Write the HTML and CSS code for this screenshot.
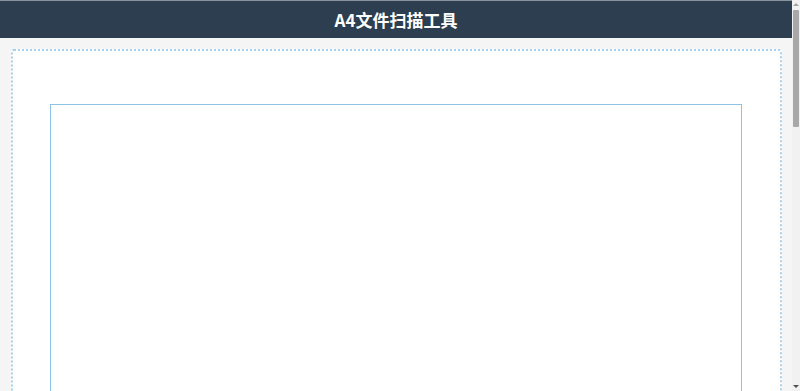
FILE: index.html
```html
<!DOCTYPE html>
<html lang="zh">
<head>
<meta charset="utf-8">
<title>A4文件扫描工具</title>
<link rel="stylesheet" href="styles.css">
</head>
<body>
<div class="app">
  <header class="topbar">
    <h1 class="title">A4文件扫描工具</h1>
  </header>
  <main class="main">
    <section class="scan-area">
      <div class="a4-frame"></div>
    </section>
  </main>
</div>
<div class="fake-scrollbar" aria-hidden="true">
  <span class="arrow arrow-up"></span>
  <span class="thumb"></span>
  <span class="arrow arrow-down"></span>
</div>
</body>
</html>
```

FILE: styles.css
```css
html, body {
  margin: 0;
  padding: 0;
}
body {
  background: #f5f5f5;
  font-family: "Noto Sans CJK SC", "Noto Sans", "Liberation Sans", sans-serif;
  padding-right: 8px;
}
.topbar {
  background: #2c3e50;
  height: 38px;
  display: flex;
  align-items: center;
  justify-content: center;
  border-top: 1px solid #8a939c;
  box-sizing: border-box;
}
.title {
  margin: 0;
  color: #ffffff;
  font-size: 17px;
  font-weight: bold;
  line-height: 1;
}
.main {
  padding: 11px 10px 20px 11px;
}
.scan-area {
  background: #ffffff;
  border: 2px dotted #a6d0ee;
  border-radius: 3px;
  padding: 53px 38px 40px 37px;
}
.a4-frame {
  border: 1px solid #8ec3e6;
  aspect-ratio: 210 / 297;
  width: 100%;
  box-sizing: border-box;
}
.fake-scrollbar {
  position: fixed;
  top: 0;
  right: 0;
  width: 8px;
  height: 100vh;
  background: #f1f1f1;
  display: flex;
  flex-direction: column;
  align-items: center;
}
.arrow {
  width: 0;
  height: 0;
  border-left: 3px solid transparent;
  border-right: 3px solid transparent;
}
.arrow-up {
  margin-top: 3px;
  border-bottom: 3px solid #a3a3a3;
}
.arrow-down {
  margin-top: auto;
  margin-bottom: 3px;
  border-top: 3px solid #505050;
}
.thumb {
  margin-top: 4px;
  width: 6px;
  height: 117px;
  background: #a8a8a8;
  border-radius: 1px;
}
```
